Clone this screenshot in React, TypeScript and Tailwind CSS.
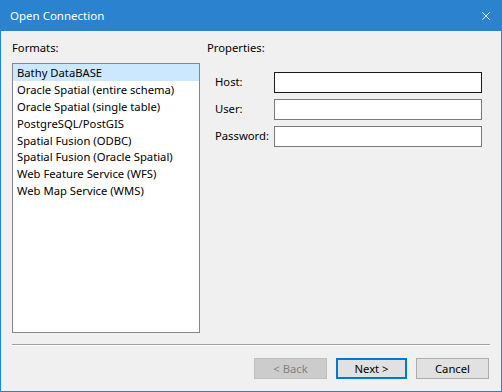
import { X } from "lucide-react";

const formats = [
  "Bathy DataBASE",
  "Oracle Spatial (entire schema)",
  "Oracle Spatial (single table)",
  "PostgreSQL/PostGIS",
  "Spatial Fusion (ODBC)",
  "Spatial Fusion (Oracle Spatial)",
  "Web Feature Service (WFS)",
  "Web Map Service (WMS)",
];

const fields = ["Host:", "User:", "Password:"];

export default function App() {
  return (
    <div
      className="w-[502px] h-[392px] flex flex-col bg-[#2b83d0] text-[11.25px] text-black"
      style={{ fontFamily: '"Noto Sans", "Open Sans", sans-serif' }}
    >
      <div className="h-[31px] flex items-center justify-between pl-[10px] pr-[9px] text-white">
        <span className="leading-none text-[11.5px]">Open Connection</span>
        <X size={14} strokeWidth={1.5} />
      </div>
      <div className="flex-1 mx-px mb-px bg-[#f0f0f0] flex flex-col px-[11px]">
        <div className="flex gap-[7px] pt-[9px]">
          <div className="w-[188px] flex flex-col">
            <div className="h-[16px] leading-[16px]">Formats:</div>
            <div className="mt-[7px] h-[270px] bg-white border border-[#828790]">
              {formats.map((f, i) => (
                <div
                  key={f}
                  className={
                    "h-[16.9px] leading-[17px] pl-[4px] whitespace-nowrap " +
                    (i === 0 ? "bg-[#cce8ff]" : "")
                  }
                >
                  {f}
                </div>
              ))}
            </div>
          </div>
          <div className="flex-1 flex flex-col">
            <div className="h-[16px] leading-[16px]">Properties:</div>
            <div className="mt-[16px] flex flex-col gap-[6px] pl-[8px]">
              {fields.map((f, i) => (
                <div key={f} className="flex items-center">
                  <span className="w-[59px]">{f}</span>
                  <div
                    className={
                      "w-[208px] h-[21px] bg-white border " +
                      (i === 0 ? "border-[#1a1a1a]" : "border-[#7a7a7a]")
                    }
                  />
                </div>
              ))}
            </div>
          </div>
        </div>
        <div className="mt-[11px] w-[478px] border-t border-[#a0a0a0] border-b border-b-white" />
        <div className="mt-[12px] flex justify-end gap-[9px] pr-[1px]">
          <button
            type="button"
            className="w-[73px] h-[21px] bg-[#cccccc] border border-[#bfbfbf] text-[#838383] leading-none"
          >
            &lt; Back
          </button>
          <button
            type="button"
            className="w-[71px] h-[21px] bg-[#e1e1e1] border-2 border-[#0078d7] leading-none"
          >
            Next &gt;
          </button>
          <button
            type="button"
            className="w-[73px] h-[21px] bg-[#e1e1e1] border border-[#adadad] leading-none"
          >
            Cancel
          </button>
        </div>
      </div>
    </div>
  );
}
